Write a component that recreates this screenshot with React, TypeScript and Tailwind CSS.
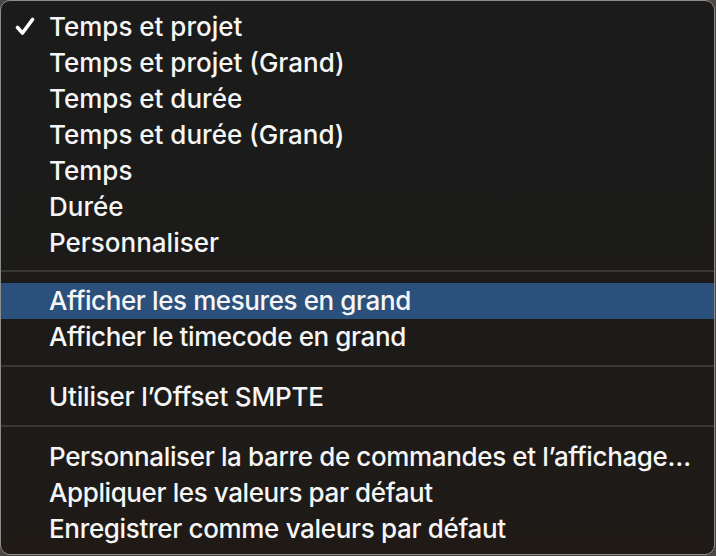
import React from "react";

type Item = { label: string; checked?: boolean; active?: boolean; track?: string };

const groups: { items: Item[]; sep: string }[] = [
  {
    sep: "",
    items: [
      { label: "Temps et projet", checked: true },
      { label: "Temps et projet (Grand)" },
      { label: "Temps et durée" },
      { label: "Temps et durée (Grand)" },
      { label: "Temps" },
      { label: "Durée" },
      { label: "Personnaliser" },
    ],
  },
  {
    sep: "h-[22px] pt-[9px]",
    items: [
      { label: "Afficher les mesures en grand", active: true, track: "tracking-[-0.4px]" },
      { label: "Afficher le timecode en grand", track: "tracking-[-0.4px]" },
    ],
  },
  {
    sep: "h-[24px] pt-[10px]",
    items: [{ label: "Utiliser l’Offset SMPTE", track: "tracking-[-0.2px]" }],
  },
  {
    sep: "h-[24px] pt-[10px]",
    items: [
      { label: "Personnaliser la barre de commandes et l’affichage…", track: "tracking-[-0.36px]" },
      { label: "Appliquer les valeurs par défaut", track: "tracking-[-0.4px]" },
      { label: "Enregistrer comme valeurs par défaut", track: "tracking-[-0.33px]" },
    ],
  },
];

function Check() {
  return (
    <svg width="20" height="20" viewBox="0 0 20 20" className="absolute left-[14px] top-[8px]">
      <path
        d="M2.5 10.5 L7.5 16 L17.5 2.5"
        fill="none"
        stroke="#ffffff"
        strokeWidth="3.6"
        strokeLinecap="round"
        strokeLinejoin="round"
      />
    </svg>
  );
}

export default function App() {
  return (
    <div className="h-[556px] w-[716px] overflow-hidden bg-[#4a4744]">
      <div
        className="h-[555px] w-[715px] rounded-[10px] border-[1.5px] border-[#8c8c8c] bg-gradient-to-b from-[#1b1b1b] via-[#1c1b1a] to-[#1f1a16] pt-[8px] text-[26px] font-medium leading-[36px] text-[#f6f6f6]"
        style={{ fontFamily: "Inter, 'Noto Sans', sans-serif" }}
      >
        {groups.map((g, gi) => (
          <div key={gi}>
            {g.sep && (
              <div className={g.sep}>
                <div className="h-[2px] bg-[#383735]" />
              </div>
            )}
            {g.items.map((it) => (
              <div
                key={it.label}
                className={`relative h-9 whitespace-nowrap pl-[48px] ${
                  it.active ? "bg-[#2a507b]" : ""
                } ${it.track ?? ""}`}
              >
                {it.checked && <Check />}
                {it.label}
              </div>
            ))}
          </div>
        ))}
      </div>
    </div>
  );
}
